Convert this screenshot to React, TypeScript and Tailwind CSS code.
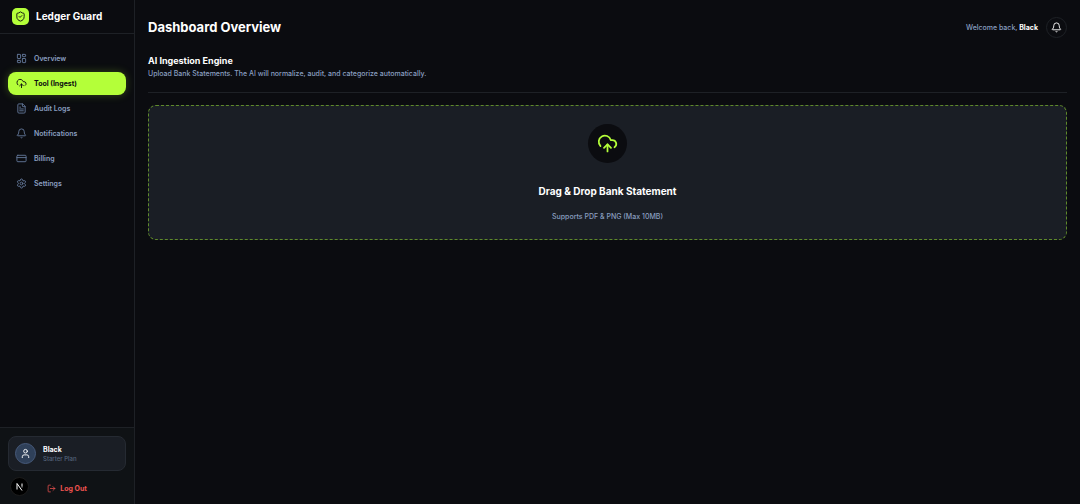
import {
    Bell,
    CloudUpload,
    CreditCard,
    FileText,
    LayoutDashboard,
    LogOut,
    Settings,
    ShieldCheck,
    User,
} from "lucide-react";

const navItems = [
    { label: "Overview", icon: LayoutDashboard },
    { label: "Tool (Ingest)", icon: CloudUpload, active: true },
    { label: "Audit Logs", icon: FileText },
    { label: "Notifications", icon: Bell },
    { label: "Billing", icon: CreditCard },
    { label: "Settings", icon: Settings },
];

function Sidebar() {
    return (
        <aside className="flex w-[135px] shrink-0 flex-col border-r border-[#1e2126] bg-[#0b0c10]">
            {/* Brand */}
            <div className="flex h-[34px] items-center gap-[7px] border-b border-[#1e2126] px-3">
                <span className="flex size-[17px] items-center justify-center rounded-[5px] bg-[#b4ff39] text-[#0b0c10]">
                    <ShieldCheck size={11} />
                </span>
                <span className="text-[10px] font-bold text-white">Ledger Guard</span>
            </div>

            <nav className="flex flex-1 flex-col gap-0.5 px-2 pt-[13px]">
                {navItems.map(({ label, icon: Icon, active }) => (
                    <a
                        key={label}
                        href="#"
                        className={`flex h-[23px] items-center gap-[7px] rounded-lg px-2 text-[7px] leading-[11px] ${
                            active
                                ? "bg-[#b4ff39] font-bold text-[#0b0c10] shadow-[0_0_8px_rgba(180,255,57,0.25)]"
                                : "font-semibold text-[#8a9fc0]"
                        }`}
                    >
                        <Icon size={11} className={active ? "" : "text-[#64789a]"} />
                        {label}
                    </a>
                ))}
            </nav>

            {/* Account */}
            <div className="border-t border-[#1e2126] bg-[#0f1215] px-2 pt-2 pb-[7px]">
                <div className="flex h-[35px] items-center gap-[7px] rounded-lg border border-[#252a32] bg-[#1a1e25] px-1.5">
                    <span className="flex size-[21px] items-center justify-center rounded-full border border-[#46597a] bg-[#2f4059] text-white">
                        <User size={11} />
                    </span>
                    <div>
                        <p className="text-[7px] leading-[9px] font-bold text-white">Black</p>
                        <p className="text-[6px] leading-[9px] font-medium text-[#56657c]">Starter Plan</p>
                    </div>
                </div>
                <button className="mt-2 flex h-[18px] w-full items-center justify-center gap-1 text-[7px] leading-[11px] font-bold text-[#ef5350]">
                    <LogOut size={9} />
                    Log Out
                </button>
            </div>
        </aside>
    );
}

export default function App() {
    return (
        <div className="flex min-h-screen bg-[#0b0c10] font-['Inter',sans-serif] text-white">
            <Sidebar />

            <main className="min-w-0 flex-1 px-[13px] pt-4">
                <header className="flex h-[22px] items-center justify-between">
                    <h1 className="text-[13px] leading-4 font-bold">Dashboard Overview</h1>
                    <div className="flex items-center gap-2">
                        <p className="text-[7px] leading-[11px] font-medium text-[#8a9fc0]">
                            Welcome back, <span className="font-bold text-white">Black</span>
                        </p>
                        <button
                            aria-label="Notifications"
                            className="flex size-[21px] items-center justify-center rounded-full border border-[#1e2126]"
                        >
                            <Bell size={11} />
                        </button>
                    </div>
                </header>

                <section className="mt-4 border-b border-[#1e2126] pb-[13px]">
                    <h2 className="text-[9px] leading-[14px] font-bold">AI Ingestion Engine</h2>
                    <p className="text-[7px] leading-[11px] font-medium text-[#8a9fc0]">
                        Upload Bank Statements. The AI will normalize, audit, and categorize automatically.
                    </p>
                </section>

                <button className="mt-3 flex h-[135px] w-full flex-col items-center rounded-lg border border-dashed border-[#5f8a2b] bg-[#1a1e25] pt-[18px]">
                    <span className="flex size-[39px] items-center justify-center rounded-full bg-[#0b0c10] text-[#b4ff39]">
                        <CloudUpload size={21} />
                    </span>
                    <span className="mt-5 text-[10px] leading-4 font-bold">Drag &amp; Drop Bank Statement</span>
                    <span className="mt-3 text-[7px] leading-3 font-medium text-[#8a9fc0]">Supports PDF &amp; PNG (Max 10MB)</span>
                </button>
            </main>

            {/* Dev tools badge */}
            <button
                aria-label="Open Next.js Dev Tools"
                className="fixed bottom-2 left-2.5 flex size-[19px] items-center justify-center rounded-full border border-[#1c1c1c] bg-black"
            >
                <svg width="9" height="9" viewBox="0 0 18 18" fill="none">
                    <defs>
                        <linearGradient id="stem" x1="14" y1="2" x2="14" y2="13" gradientUnits="userSpaceOnUse">
                            <stop stopColor="#fff" />
                            <stop offset="0.5" stopColor="#fff" />
                            <stop offset="1" stopColor="#fff" stopOpacity="0" />
                        </linearGradient>
                    </defs>
                    <path d="M4 15V3L14 17" stroke="#fff" strokeWidth="2" strokeLinejoin="bevel" />
                    <path d="M14 3V13" stroke="url(#stem)" strokeWidth="2" />
                </svg>
            </button>
        </div>
    );
}
